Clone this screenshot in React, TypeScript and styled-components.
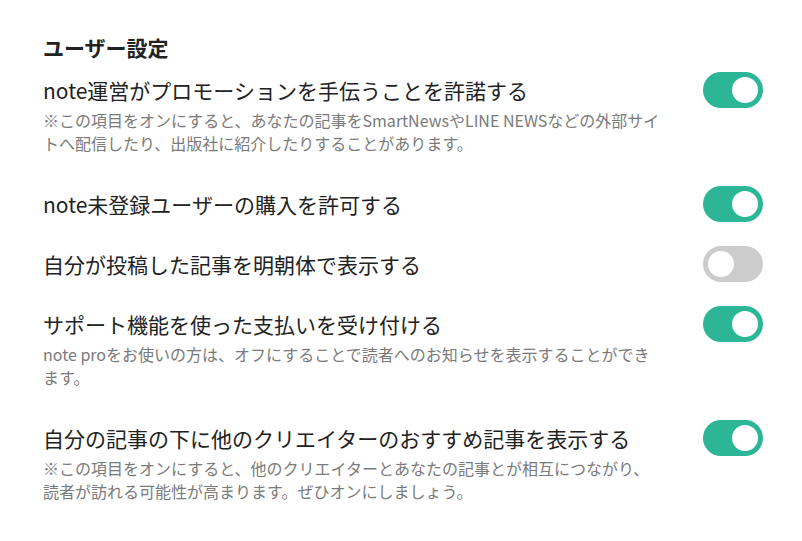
import styled, {createGlobalStyle} from "styled-components";
import {useState} from "react";

const GlobalStyle = createGlobalStyle`
  body {
    margin: 0;
    background: #fff;
    font-family: "Noto Sans CJK JP", "Noto Sans", sans-serif;
    color: #222;
  }
`;

const Container = styled.div`
  padding: 34px 39px 30px 43px;
`;

const Heading = styled.h2`
  margin: 0;
  font-size: 21px;
  line-height: 26px;
  font-weight: 700;
  color: #222;
`;

const SettingList = styled.ul`
  list-style: none;
  margin: 0;
  padding: 0;
`;

const Row = styled.li`
  display: flex;
  align-items: flex-start;
  justify-content: space-between;
  padding: 15px 0;
`;

const Text = styled.div`
  flex: 1;
  max-width: 620px;
`;

const Title = styled.div`
  font-size: 21px;
  line-height: 30px;
  color: #222;
`;

const Description = styled.p`
  margin: 4px 0;
  font-size: 16px;
  line-height: 23px;
  color: #7a7a7a;
`;

const Toggle = styled.button<{ $on: boolean }>`
  flex-shrink: 0;
  position: relative;
  width: 60px;
  height: 36px;
  margin: -3px 0;
  padding: 0;
  border: none;
  border-radius: 18px;
  background: ${props => props.$on ? "#2cb696" : "#cccccc"};
  cursor: pointer;

  &::after {
    content: "";
    position: absolute;
    top: 5px;
    left: ${props => props.$on ? "29px" : "5px"};
    width: 26px;
    height: 26px;
    border-radius: 50%;
    background: #fff;
    transition: left 0.2s;
  }
`;

interface ISetting {
    id: string,
    title: string,
    description?: string,
    on: boolean,
}

const initialSettings: ISetting[] = [
    {
        id: "promotion",
        title: "note運営がプロモーションを手伝うことを許諾する",
        description: "※この項目をオンにすると、あなたの記事をSmartNewsやLINE NEWSなどの外部サイトへ配信したり、出版社に紹介したりすることがあります。",
        on: true,
    },
    {id: "guest", title: "note未登録ユーザーの購入を許可する", on: true},
    {id: "mincho", title: "自分が投稿した記事を明朝体で表示する", on: false},
    {
        id: "support",
        title: "サポート機能を使った支払いを受け付ける",
        description: "note proをお使いの方は、オフにすることで読者へのお知らせを表示することができます。",
        on: true,
    },
    {
        id: "recommend",
        title: "自分の記事の下に他のクリエイターのおすすめ記事を表示する",
        description: "※この項目をオンにすると、他のクリエイターとあなたの記事とが相互につながり、読者が訪れる可能性が高まります。ぜひオンにしましょう。",
        on: true,
    },
];

function App() {
    const [settings, setSettings] = useState(initialSettings);
    const toggle = (id: string) =>
        setSettings(prev => prev.map(s => s.id === id ? {...s, on: !s.on} : s));
    return (
        <Container>
            <GlobalStyle/>
            <Heading>ユーザー設定</Heading>
            <SettingList>
                {settings.map(s =>
                    <Row key={s.id}>
                        <Text>
                            <Title>{s.title}</Title>
                            {s.description && <Description>{s.description}</Description>}
                        </Text>
                        <Toggle $on={s.on} aria-label={s.title} onClick={() => toggle(s.id)}/>
                    </Row>
                )}
            </SettingList>
        </Container>
    );
}

export default App;
